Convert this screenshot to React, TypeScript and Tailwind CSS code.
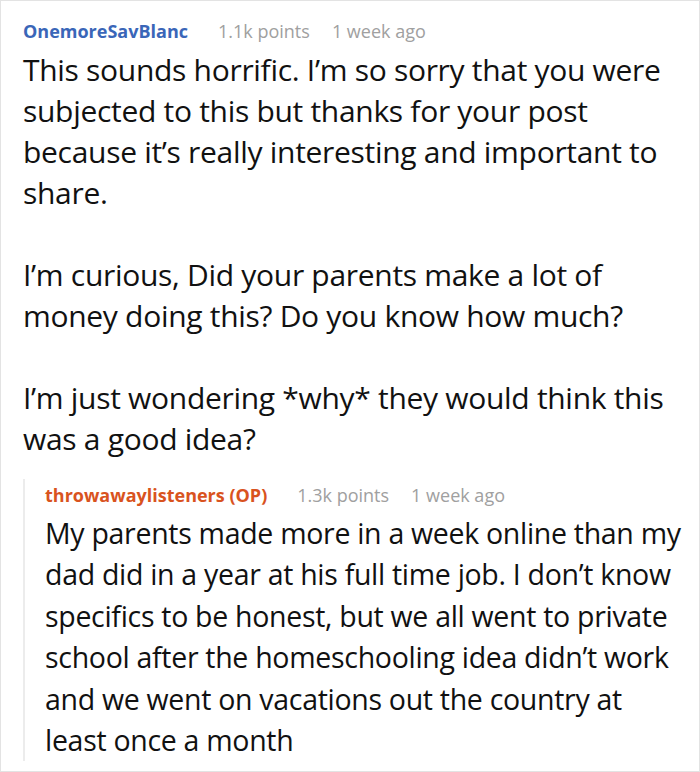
export default function App() {
  return (
    <div className="w-[700px] h-[772px] bg-white border border-[#e3e3e3] overflow-hidden" style={{ fontFamily: '"Open Sans", sans-serif' }}>
      <div className="pl-[22px] pr-[14px] pt-[14px]">
        <div className="flex items-baseline text-[18px] leading-[32px]">
          <span className="font-bold text-[#3a66b8]">OnemoreSavBlanc</span>
          <span className="ml-[30px] text-[#a0a0a0]">1.1k points</span>
          <span className="ml-[22px] text-[#a0a0a0]">1 week ago</span>
        </div>
        <div className="text-[30px] leading-[41px] text-[#111] mt-[2px] tracking-[-0.3px]">
          <p>This sounds horrific. I’m so sorry that you were subjected to this but thanks for your post because it’s really interesting and important to share.</p>
          <p className="mt-[41px]">I’m curious, Did your parents make a lot of money doing this? Do you know how much?</p>
          <p className="mt-[41px]">I’m just wondering *why* they would think this was a good idea?</p>
        </div>
        <div className="mt-[20px] border-l-2 border-[#ececec] pl-[20px]">
          <div className="flex items-baseline text-[18px] leading-[32px]">
            <span className="font-bold text-[#d9531e]">throwawaylisteners (OP)</span>
            <span className="ml-[30px] text-[#a0a0a0]">1.3k points</span>
            <span className="ml-[22px] text-[#a0a0a0]">1 week ago</span>
          </div>
          <div className="text-[28.5px] leading-[41.4px] text-[#111] mt-[2px] tracking-[-0.3px]">
            <p>My parents made more in a week online than my dad did in a year at his full time job. I don’t know specifics to be honest, but we all went to private school after the homeschooling idea didn’t work and we went on vacations out the country at least once a month</p>
          </div>
        </div>
      </div>
    </div>
  );
}
